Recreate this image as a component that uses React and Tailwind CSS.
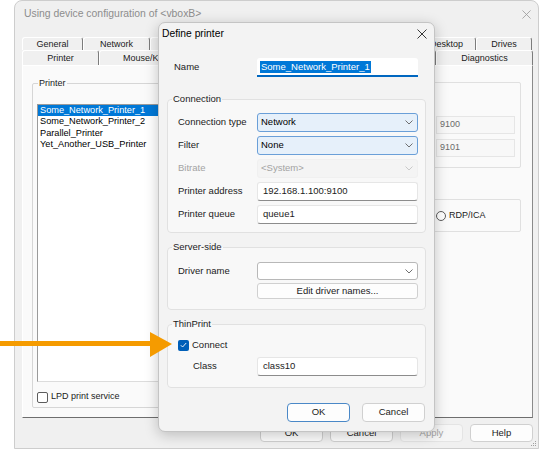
import React from "react";

const Chevron = ({ color = "#606060" }) => (
  <svg width="8" height="5" viewBox="0 0 8 5" className="shrink-0">
    <polyline points="0.5,0.5 4,4 7.5,0.5" fill="none" stroke={color} strokeWidth="0.9" />
  </svg>
);

const CloseX = ({ color, size }) => (
  <svg width={size} height={size} viewBox="0 0 10 10">
    <path d="M0.5 0.5 L9.5 9.5 M9.5 0.5 L0.5 9.5" stroke={color} strokeWidth="0.9" />
  </svg>
);

const Combo = ({ value, variant }) => {
  const styles = {
    active: "bg-[#e6f0fa] border-[#6a9fd8] text-black",
    disabled: "bg-[#f4f4f4] border-[#f0f0f0] text-[#a3a3a3]",
    plain: "bg-white border-[#b8b8b8] text-black",
  };
  return (
    <div
      className={`flex-1 h-full flex items-center justify-between pl-[3px] pr-[4px] border rounded-[3px] ${styles[variant]}`}
    >
      <span>{value}</span>
      <Chevron color={variant === "disabled" ? "#c4c4c4" : "#606060"} />
    </div>
  );
};

const TextBox = ({ value }) => (
  <div className="flex-1 h-full flex items-center pl-[5px] bg-white border border-[#e6e6e6] border-b-[#8c8c8c] rounded-[3px]">
    {value}
  </div>
);

const Row = ({ label, disabled, children, h = "h-[19px]" }) => (
  <div className={`flex items-center ${h}`}>
    <div className={`w-[79px] shrink-0 ${disabled ? "text-[#a3a3a3]" : ""}`}>{label}</div>
    <div className="w-[161px] h-full flex">{children}</div>
  </div>
);

// group box: legend sits after the fieldset padding, so pull it back left
const Group = ({ title, className = "", children }) => (
  <fieldset
    className={`mx-[8px] border border-[#e1e1e1] rounded-[4px] bg-[#f8f8f8] pl-[10px] pr-[7px] ${className}`}
  >
    <legend className="-ml-[6px] px-[1px] leading-[12px]">{title}</legend>
    {children}
  </fieldset>
);

const Button = ({ children, focused, disabled, className = "" }) => (
  <div
    className={`w-[63px] flex items-center justify-center rounded-[4px] ${
      focused
        ? "border-[1.5px] border-[#4a88c7] bg-[#fdfdfd]"
        : disabled
        ? "border border-[#e4e4e4] bg-[#f6f6f6] text-[#a5a5a5]"
        : "border border-[#d0d0d0] bg-[#fdfdfd]"
    } ${className}`}
  >
    {children}
  </div>
);

const Tab = ({ w, children, h }) => (
  <div
    className={`${w} ${h} shrink-0 flex items-center justify-center border-t border-l border-white border-r border-r-[#7c7c7c] rounded-t-[3px] leading-none`}
  >
    {children}
  </div>
);

const printers = [
  "Some_Network_Printer_1",
  "Some_Network_Printer_2",
  "Parallel_Printer",
  "Yet_Another_USB_Printer",
];

export default function App() {
  return (
    <div className="relative w-[541px] h-[451px] bg-white overflow-hidden font-['Liberation_Sans',Arial,sans-serif] text-[9.5px] text-[#1b1b1b]">
      {/* background window */}
      <div className="relative ml-[14px] w-[525px] h-[449px] border border-[#cdcdcd] rounded-t-[8px] bg-[#f0f0f0] flex flex-col">
        <div className="h-[26px] flex items-center justify-between pl-[9px] pr-[7px]">
          <span className="text-[10.4px] text-[#8d8d8d]">Using device configuration of &lt;vboxB&gt;</span>
          <CloseX color="#9a9a9a" size={9} />
        </div>

        <div className="mt-[10px] ml-[7px] w-[511px] text-[9px]">
          <div className="flex">
            <Tab w="w-[61px]" h="h-[13px]">General</Tab>
            <Tab w="w-[67px]" h="h-[13px]">Network</Tab>
            <Tab w="w-[133px]" h="h-[13px]" />
            <Tab w="w-[134px]" h="h-[13px]" />
            <Tab w="w-[59px]" h="h-[13px]">Desktop</Tab>
            <Tab w="w-[56px]" h="h-[13px]">Drives</Tab>
          </div>
          <div className="flex">
            <Tab w="w-[77px]" h="h-[15px]">Printer</Tab>
            <Tab w="w-[116px]" h="h-[15px]">Mouse/Keyboard</Tab>
            <Tab w="w-[110px]" h="h-[15px]" />
            <Tab w="w-[111px]" h="h-[15px]" />
            <Tab w="w-[97px]" h="h-[15px]">Diagnostics</Tab>
          </div>

          <div className="h-[353px] bg-[#fafafa] border-l border-t border-white border-r border-r-[#8a8a8a] border-b border-b-[#6e6e6e] pt-[11px] pl-[9px] flex">
            <fieldset className="w-[393px] self-start border border-[#d6d6d6] rounded-[2px] pl-[4px] pr-[4px] pb-[4px]">
              <legend className="ml-[1px] px-[1px] leading-[12px]">Printer</legend>
              <div className="mt-[15px] h-[278px] bg-white border border-[#9a9a9a] border-r-[#dcdcdc] border-b-[#dcdcdc] text-[9.2px]">
                {printers.map((p, i) => (
                  <div
                    key={p}
                    className={`h-[11.3px] leading-[11.3px] pl-[2px] ${i === 0 ? "bg-[#0078d7] text-white" : "text-black"}`}
                  >
                    {p}
                  </div>
                ))}
              </div>
              <div className="mt-[9px] h-[12px] flex items-center">
                <div className="w-[11px] h-[11px] border border-[#5c5c5c] rounded-[2px] bg-white" />
                <span className="ml-[3px]">LPD print service</span>
              </div>
            </fieldset>

            <div className="ml-[8px] w-[88px] flex flex-col">
              <div className="mt-[5px] h-[86px] border border-[#e0e0e0] rounded-[2px] pt-[33px] pl-[2px] flex flex-col gap-[5px] text-[#6b6b6b]">
                <div className="w-[79px] h-[18px] flex items-center pl-[3px] bg-[#f8f8f8] border border-[#e6e6e6]">9100</div>
                <div className="w-[79px] h-[18px] flex items-center pl-[3px] bg-[#f8f8f8] border border-[#e6e6e6]">9101</div>
              </div>
              <div className="mt-[31px] h-[33px] border border-[#e0e0e0] rounded-[2px] pl-[2px] flex items-center">
                <div className="w-[10px] h-[10px] rounded-full border border-[#5c5c5c] bg-white" />
                <span className="ml-[3px]">RDP/ICA</span>
              </div>
            </div>
          </div>
        </div>

        <div className="mt-[6px] h-[18px] flex justify-end gap-[7px] pr-[5px]">
          <Button>OK</Button>
          <Button>Cancel</Button>
          <Button disabled>Apply</Button>
          <Button>Help</Button>
        </div>

        <svg className="absolute right-[1px] bottom-[1px]" width="7" height="7" viewBox="0 0 7 7">
          <rect x="5" y="1" width="1" height="1" fill="#a0a0a0" />
          <rect x="3" y="3" width="1" height="1" fill="#a0a0a0" />
          <rect x="5" y="3" width="1" height="1" fill="#a0a0a0" />
          <rect x="1" y="5" width="1" height="1" fill="#a0a0a0" />
          <rect x="3" y="5" width="1" height="1" fill="#a0a0a0" />
          <rect x="5" y="5" width="1" height="1" fill="#a0a0a0" />
        </svg>
      </div>

      {/* Define printer dialog */}
      <div className="absolute left-[158px] top-[22px] w-[277px] h-[410px] z-10 bg-[#f3f3f3] border border-[#c4c4c4] rounded-[7px] shadow-[0_3px_14px_rgba(0,0,0,0.22)] flex flex-col">
        <div className="h-[21px] flex items-center justify-between pl-[3px] pr-[7px]">
          <span className="text-[10.3px] text-black">Define printer</span>
          <CloseX color="#222" size={10} />
        </div>

        <div className="mt-[14px] h-[19px] flex items-center pl-[15px]">
          <div className="w-[83px] shrink-0">Name</div>
          <div className="w-[161px] h-full flex items-center pl-[3px] bg-white border-b-2 border-[#0067c0] rounded-t-[3px]">
            <span className="bg-[#0078d7] text-white leading-[12px] px-[1px]">Some_Network_Printer_1</span>
          </div>
        </div>

        <Group title="Connection" className="mt-[16px] pt-[8px] pb-[8px]">
          <div className="flex flex-col gap-[4px]">
            <Row label="Connection type">
              <Combo value="Network" variant="active" />
            </Row>
            <Row label="Filter">
              <Combo value="None" variant="active" />
            </Row>
            <Row label="Bitrate" disabled>
              <Combo value="<System>" variant="disabled" />
            </Row>
            <Row label="Printer address">
              <TextBox value="192.168.1.100:9100" />
            </Row>
            <Row label="Printer queue">
              <TextBox value="queue1" />
            </Row>
          </div>
        </Group>

        <Group title="Server-side" className="mt-[8px] pt-[9px] pb-[10px]">
          <Row label="Driver name" h="h-[18px]">
            <Combo value="" variant="plain" />
          </Row>
          <div className="mt-[3px] ml-[79px] w-[161px] h-[16px] flex items-center justify-center bg-[#fdfdfd] border border-[#d0d0d0] rounded-[3px]">
            Edit driver names...
          </div>
        </Group>

        <Group title="ThinPrint" className="mt-[8px] pt-[9px] pb-[11px]">
          <div className="h-[12px] flex items-center">
            <div className="w-[11px] h-[11px] rounded-[2px] bg-[#005fb8] flex items-center justify-center">
              <svg width="7" height="6" viewBox="0 0 7 6">
                <polyline points="0.8,3.2 2.6,5 6.2,1" fill="none" stroke="white" strokeWidth="0.9" />
              </svg>
            </div>
            <span className="ml-[3px]">Connect</span>
          </div>
          <div className="mt-[6px]">
            <Row label={<span className="pl-[15px]">Class</span>}>
              <TextBox value="class10" />
            </Row>
          </div>
        </Group>

        <div className="mt-[15px] h-[19px] flex justify-end gap-[12px] pr-[9px]">
          <Button focused>OK</Button>
          <Button>Cancel</Button>
        </div>
      </div>

      {/* callout arrow */}
      <svg className="absolute left-0 top-[330px] z-20" width="176" height="30" viewBox="0 0 176 30">
        <rect x="0" y="11" width="152" height="5" fill="#f59b00" />
        <polygon points="150,2 172,14 150,27" fill="#f59b00" />
      </svg>
    </div>
  );
}
